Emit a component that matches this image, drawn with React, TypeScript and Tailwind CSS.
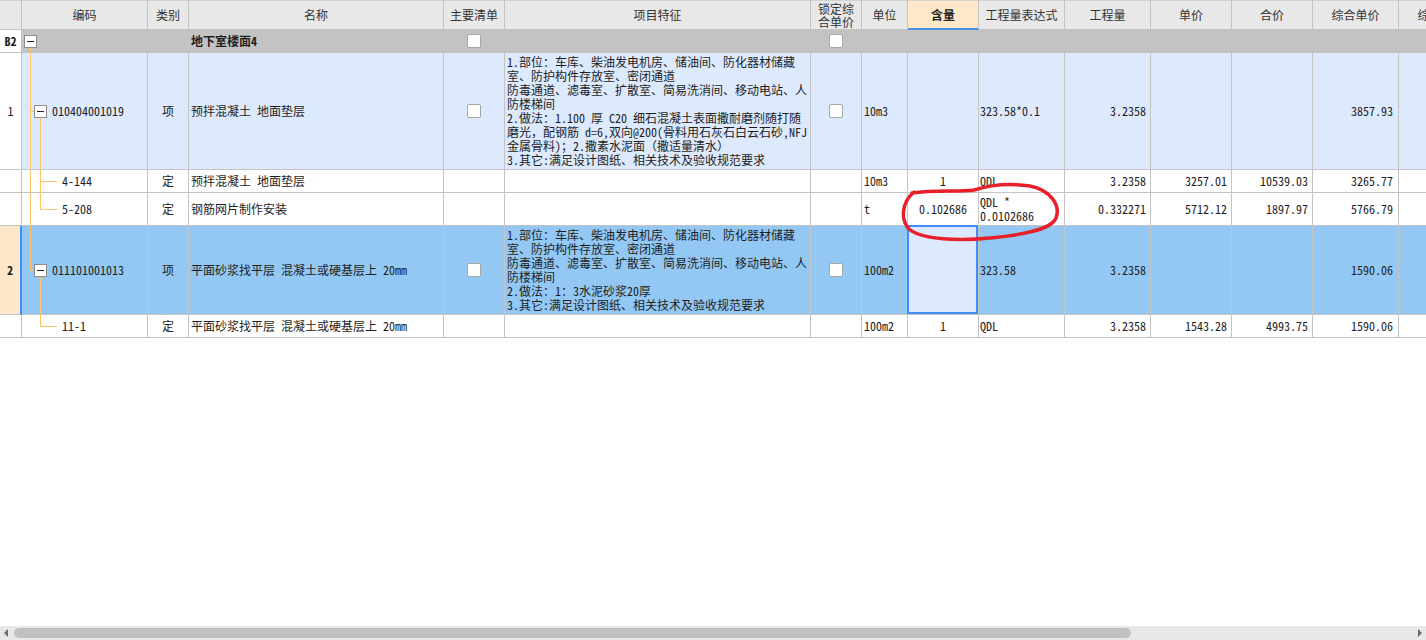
import React from 'react';

const W = [
  'w-[22px]',
  'w-[126px]',
  'w-[41px]',
  'w-[255px]',
  'w-[61px]',
  'w-[306px]',
  'w-[51px]',
  'w-[46px]',
  'w-[71px]',
  'w-[86px]',
  'w-[86px]',
  'w-[81px]',
  'w-[81px]',
  'w-[86px]',
  'w-[86px]',
];

const Cell: React.FC<{ i: number; className?: string; children?: React.ReactNode }> = ({ i, className = '', children }) => (
  <div className={`${W[i]} shrink-0 h-full border-r border-b border-[#c4c4c4] overflow-hidden flex items-center ${className}`}>
    {children}
  </div>
);

const Check = () => <span className="inline-block w-[14px] h-[14px] bg-white border border-[#a6a6a6] rounded-[2px]" />;

const MinusBox: React.FC<{ left: string }> = ({ left }) => (
  <span
    className={`absolute ${left} top-1/2 -mt-[6px] w-[13px] h-[13px] bg-white border border-[#8c8c8c] flex items-center justify-center z-10`}
  >
    <span className="w-[7px] h-px bg-[#222]" />
  </span>
);

type Seg = 'none' | 'full' | 'top' | 'bottom';

// tree lines in the code column
const Tree: React.FC<{ main: Seg; sub: Seg; kind: 'group' | 'item' | 'child' }> = ({ main, sub, kind }) => {
  const line = 'absolute w-px bg-[#ffc46a]';
  const seg = (s: Seg, left: string) => {
    if (s === 'full') return <span className={`${line} ${left} top-0 -bottom-px`} />;
    if (s === 'top') return <span className={`${line} ${left} top-0 h-1/2`} />;
    if (s === 'bottom') return <span className={`${line} ${left} top-1/2 -bottom-px mt-[6px]`} />;
    return null;
  };
  return (
    <>
      {seg(main, 'left-[8px]')}
      {seg(sub, 'left-[18px]')}
      {kind === 'item' && <span className="absolute left-[8px] top-1/2 w-[4px] h-px bg-[#ffc46a]" />}
      {kind === 'child' && <span className="absolute left-[18px] top-1/2 w-[17px] h-px bg-[#ffc46a]" />}
      {kind === 'group' && <MinusBox left="left-[2px]" />}
      {kind === 'item' && <MinusBox left="left-[12px]" />}
    </>
  );
};

const DESC1 = [
  '1.部位：车库、柴油发电机房、储油间、防化器材储藏',
  '室、防护构件存放室、密闭通道',
  '防毒通道、滤毒室、扩散室、简易洗消间、移动电站、人',
  '防楼梯间',
  '2.做法：1.100 厚 C20 细石混凝土表面撒耐磨剂随打随',
  '磨光，配钢筋 d=6,双向@200(骨料用石灰石白云石砂,NFJ',
  '金属骨料)；2.撒素水泥面（撒适量清水）',
  '3.其它:满足设计图纸、相关技术及验收规范要求',
];

const DESC2 = [
  '1.部位：车库、柴油发电机房、储油间、防化器材储藏',
  '室、防护构件存放室、密闭通道',
  '防毒通道、滤毒室、扩散室、简易洗消间、移动电站、人',
  '防楼梯间',
  '2.做法：1：3水泥砂浆20厚',
  '3.其它:满足设计图纸、相关技术及验收规范要求',
];

const Lines: React.FC<{ lines: string[] }> = ({ lines }) => (
  <div className="flex flex-col">
    {lines.map((l, k) => (
      <div key={k} className="whitespace-pre leading-[14px] h-[14px]">
        {l}
      </div>
    ))}
  </div>
);

const HEAD = ['', '编码', '类别', '名称', '主要清单', '项目特征', '', '单位', '含量', '工程量表达式', '工程量', '单价', '合价', '综合单价', '综合合价'];

export default function App() {
  return (
    <div className="w-[1426px] h-[640px] bg-white flex flex-col overflow-hidden text-[#1e1e1e]">
      <div className="relative flex-1 overflow-hidden">
        {/* Header */}
        <div className="flex h-[30px] bg-[#e8e8e8] text-[12px] text-[#333] font-['Noto_Sans_CJK_SC',sans-serif]">
          {HEAD.map((h, i) => {
            if (i === 6)
              return (
                <Cell key={i} i={i} className="justify-center border-t border-t-[#d2d2d2]">
                  <div className="text-center leading-[13px]">
                    锁定综
                    <br />
                    合单价
                  </div>
                </Cell>
              );
            if (i === 8)
              return (
                <Cell key={i} i={i} className="justify-center bg-[#fee8c8] border-t border-t-[#d2d2d2] border-b-2 border-b-[#4a90e2] font-bold text-[#222]">
                  {h}
                </Cell>
              );
            return (
              <Cell key={i} i={i} className="justify-center border-t border-t-[#d2d2d2] whitespace-nowrap">
                {h}
              </Cell>
            );
          })}
        </div>

        <div className="text-[12px] font-['Noto_Sans_Mono_CJK_SC','Noto_Sans_CJK_SC',monospace]">
          {/* B2 group row */}
          <div className="flex h-[23px] bg-[#c3c3c3]">
            <Cell i={0} className="justify-center bg-white font-bold">B2</Cell>
            <Cell i={1} className="relative">
              <Tree main="bottom" sub="none" kind="group" />
            </Cell>
            <Cell i={2} />
            <Cell i={3} className="pl-[2px] font-bold">地下室楼面4</Cell>
            <Cell i={4} className="justify-center"><Check /></Cell>
            <Cell i={5} />
            <Cell i={6} className="justify-center"><Check /></Cell>
            <Cell i={7} />
            <Cell i={8} />
            <Cell i={9} />
            <Cell i={10} />
            <Cell i={11} />
            <Cell i={12} />
            <Cell i={13} />
            <Cell i={14} />
          </div>

          {/* Item 1 */}
          <div className="flex h-[117px] bg-[#dde9fd]">
            <Cell i={0} className="justify-center bg-white">1</Cell>
            <Cell i={1} className="relative pl-[30px]">
              <Tree main="full" sub="bottom" kind="item" />
              010404001019
            </Cell>
            <Cell i={2} className="justify-center">项</Cell>
            <Cell i={3} className="pl-[2px] whitespace-pre">预拌混凝土 地面垫层</Cell>
            <Cell i={4} className="justify-center"><Check /></Cell>
            <Cell i={5} className="pl-[2px]"><Lines lines={DESC1} /></Cell>
            <Cell i={6} className="justify-center"><Check /></Cell>
            <Cell i={7} className="pl-[2px]">10m3</Cell>
            <Cell i={8} />
            <Cell i={9} className="pl-[1px]">323.58*0.1</Cell>
            <Cell i={10} className="justify-end pr-[4px]">3.2358</Cell>
            <Cell i={11} />
            <Cell i={12} />
            <Cell i={13} className="justify-end pr-[5px]">3857.93</Cell>
            <Cell i={14} />
          </div>

          {/* 4-144 */}
          <div className="flex h-[23px] bg-white">
            <Cell i={0} />
            <Cell i={1} className="relative pl-[40px]">
              <Tree main="full" sub="full" kind="child" />
              4-144
            </Cell>
            <Cell i={2} className="justify-center">定</Cell>
            <Cell i={3} className="pl-[2px] whitespace-pre">预拌混凝土 地面垫层</Cell>
            <Cell i={4} />
            <Cell i={5} />
            <Cell i={6} />
            <Cell i={7} className="pl-[2px]">10m3</Cell>
            <Cell i={8} className="justify-center">1</Cell>
            <Cell i={9} className="pl-[1px]">QDL</Cell>
            <Cell i={10} className="justify-end pr-[4px]">3.2358</Cell>
            <Cell i={11} className="justify-end pr-[4px]">3257.01</Cell>
            <Cell i={12} className="justify-end pr-[4px]">10539.03</Cell>
            <Cell i={13} className="justify-end pr-[5px]">3265.77</Cell>
            <Cell i={14} />
          </div>

          {/* 5-208 */}
          <div className="flex h-[33px] bg-white">
            <Cell i={0} />
            <Cell i={1} className="relative pl-[40px]">
              <Tree main="full" sub="top" kind="child" />
              5-208
            </Cell>
            <Cell i={2} className="justify-center">定</Cell>
            <Cell i={3} className="pl-[2px]">钢筋网片制作安装</Cell>
            <Cell i={4} />
            <Cell i={5} />
            <Cell i={6} />
            <Cell i={7} className="pl-[2px]">t</Cell>
            <Cell i={8} className="justify-center">0.102686</Cell>
            <Cell i={9} className="pl-[1px]"><Lines lines={['QDL *', '0.0102686']} /></Cell>
            <Cell i={10} className="justify-end pr-[4px]">0.332271</Cell>
            <Cell i={11} className="justify-end pr-[4px]">5712.12</Cell>
            <Cell i={12} className="justify-end pr-[4px]">1897.97</Cell>
            <Cell i={13} className="justify-end pr-[5px]">5766.79</Cell>
            <Cell i={14} />
          </div>

          {/* Item 2 (selected) */}
          <div className="flex h-[89px] bg-[#93c8f5]">
            <Cell i={0} className="justify-center bg-[#fde7c8] font-bold border-r-2 border-r-[#3c8ef3]">2</Cell>
            <Cell i={1} className="relative pl-[30px]">
              <Tree main="top" sub="bottom" kind="item" />
              011101001013
            </Cell>
            <Cell i={2} className="justify-center">项</Cell>
            <Cell i={3} className="pl-[2px] whitespace-pre">平面砂浆找平层 混凝土或硬基层上 20mm</Cell>
            <Cell i={4} className="justify-center"><Check /></Cell>
            <Cell i={5} className="pl-[2px]"><Lines lines={DESC2} /></Cell>
            <Cell i={6} className="justify-center"><Check /></Cell>
            <Cell i={7} className="pl-[2px]">100m2</Cell>
            <Cell i={8} className="relative overflow-visible">
              <div className="absolute -left-px -top-px right-0 bottom-0 bg-[#dde9fd] border-2 border-[#3d8ff5]" />
            </Cell>
            <Cell i={9} className="pl-[1px]">323.58</Cell>
            <Cell i={10} className="justify-end pr-[4px]">3.2358</Cell>
            <Cell i={11} />
            <Cell i={12} />
            <Cell i={13} className="justify-end pr-[5px]">1590.06</Cell>
            <Cell i={14} />
          </div>

          {/* 11-1 */}
          <div className="flex h-[23px] bg-white">
            <Cell i={0} />
            <Cell i={1} className="relative pl-[40px]">
              <Tree main="none" sub="top" kind="child" />
              11-1
            </Cell>
            <Cell i={2} className="justify-center">定</Cell>
            <Cell i={3} className="pl-[2px] whitespace-pre">平面砂浆找平层 混凝土或硬基层上 20mm</Cell>
            <Cell i={4} />
            <Cell i={5} />
            <Cell i={6} />
            <Cell i={7} className="pl-[2px]">100m2</Cell>
            <Cell i={8} className="justify-center">1</Cell>
            <Cell i={9} className="pl-[1px]">QDL</Cell>
            <Cell i={10} className="justify-end pr-[4px]">3.2358</Cell>
            <Cell i={11} className="justify-end pr-[4px]">1543.28</Cell>
            <Cell i={12} className="justify-end pr-[4px]">4993.75</Cell>
            <Cell i={13} className="justify-end pr-[5px]">1590.06</Cell>
            <Cell i={14} />
          </div>
        </div>

        {/* hand-drawn red annotation */}
        <svg className="absolute left-0 top-0 pointer-events-none" width="1426" height="340" viewBox="0 0 1426 340">
          <path
            d="M 912 193 C 935 190, 958 192, 974 190 C 990 185, 1010 183, 1030 186 C 1050 190, 1061 205, 1056 218 C 1051 230, 1022 235, 990 238 C 960 241, 922 240, 909 229 C 900 219, 902 202, 914 192"
            fill="none"
            stroke="#e8202a"
            strokeWidth="3.5"
            strokeLinecap="round"
          />
        </svg>
      </div>

      {/* horizontal scrollbar */}
      <div className="h-[14px] bg-[#e8e8e8] flex items-center">
        <div className="w-[12px] flex justify-center">
          <svg width="4" height="8" viewBox="0 0 4 8">
            <path d="M4 0 L0 4 L4 8 Z" fill="#6b6b6b" />
          </svg>
        </div>
        <div className="ml-[2px] w-[1117px] h-[10px] rounded-[5px] bg-[#c1c1c1]" />
        <div className="flex-1" />
        <div className="w-[12px] flex justify-center">
          <svg width="4" height="8" viewBox="0 0 4 8">
            <path d="M0 0 L4 4 L0 8 Z" fill="#6b6b6b" />
          </svg>
        </div>
      </div>
    </div>
  );
}
